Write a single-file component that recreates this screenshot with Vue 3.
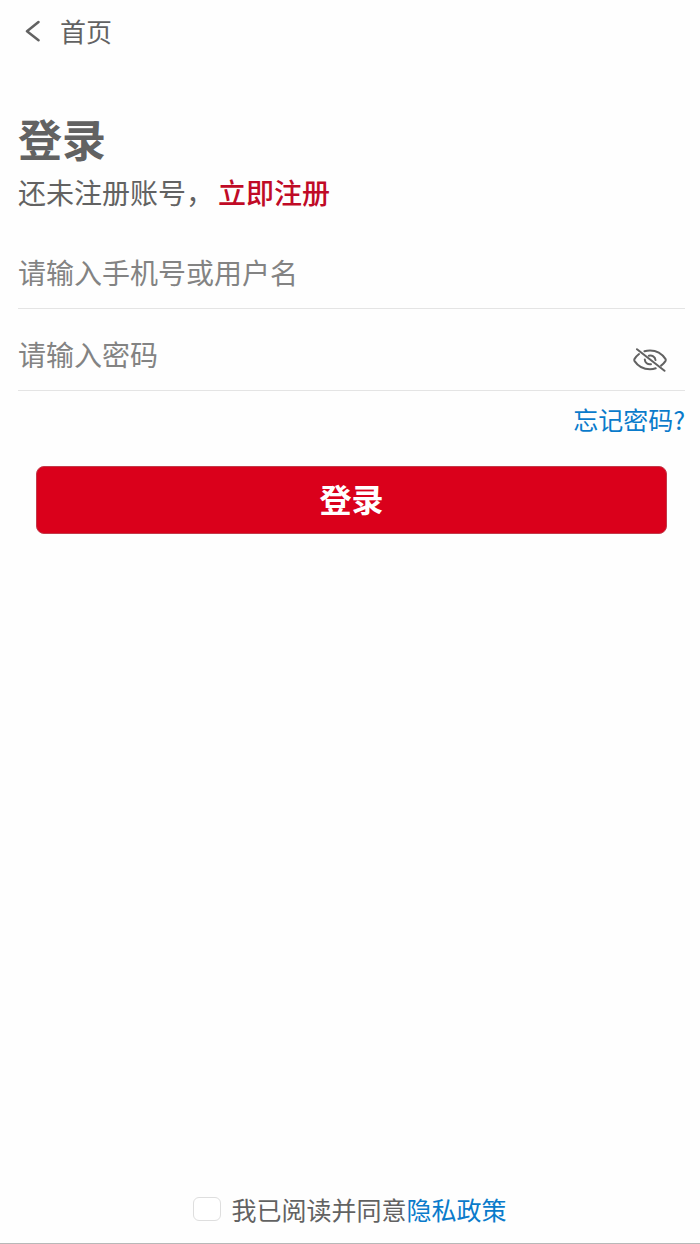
<template>
  <div class="login-page">
    <header class="nav-bar">
      <a href="#" class="back-link">
        <svg class="back-icon" viewBox="0 0 16 22" fill="none" aria-hidden="true">
          <path d="M13.500 2L2 11.300l11.500 9" />
        </svg>
        <span>首页</span>
      </a>
    </header>

    <main class="content">
      <h1>登录</h1>
      <p class="register-tip">还未注册账号，<a href="#">立即注册</a></p>

      <form @submit.prevent>
        <div class="field">
          <input
            v-model="username"
            type="text"
            placeholder="请输入手机号或用户名"
            aria-label="手机号或用户名"
          />
        </div>
        <div class="field">
          <input
            v-model="password"
            :type="showPassword ? 'text' : 'password'"
            placeholder="请输入密码"
            aria-label="密码"
          />
          <button
            type="button"
            class="eye-button"
            aria-label="显示密码"
            @click="showPassword = !showPassword"
          >
            <svg viewBox="0 0 34 24" fill="none" aria-hidden="true">
              <path d="M11.500 3.300C13.200 2.700 15 2.400 17 2.400c7.500 0 12.500 4 15.400 8.500.5.800.5 1.400 0 2.200-1.200 1.800-2.500 3.200-4.300 4.500" />
              <path d="M6 6C4.300 7.300 2.800 9 1.600 10.900c-.5.800-.5 1.400 0 2.200C4.500 17.500 9.500 21.200 17 21.200c2.100 0 4-.3 5.700-.9" />
              <path d="M15.800 7.700c3.300-.7 6.300 1 6.700 4.300" />
              <path d="M11.800 11.500c.1 3.200 2.800 5.300 6.200 4.700" />
              <path d="M4 1.200L31.500 22.800" />
            </svg>
          </button>
        </div>
        <a href="#" class="forgot-link">忘记密码?</a>
        <button type="submit" class="login-button">登录</button>
      </form>
    </main>

    <footer class="agreement">
      <input id="agree" v-model="agreed" type="checkbox" />
      <label for="agree">我已阅读并同意</label><a href="#">隐私政策</a>
    </footer>
  </div>
</template>

<script setup>
import { ref } from 'vue';

const username = ref('');
const password = ref('');
const showPassword = ref(false);
const agreed = ref(false);
</script>

<style>
body {
  background: #fefefe;
}
</style>

<style scoped>
.login-page {
  display: flex;
  flex-direction: column;
  min-height: 100vh;
  box-sizing: border-box;
  border-bottom: 1px solid #b8b8b8;
  color: #626262;
  font-family: "Noto Sans CJK SC", sans-serif;
}

a {
  text-decoration: none;
}

.nav-bar {
  padding: 11px 25px;
}

.back-link {
  display: inline-flex;
  align-items: center;
  gap: 19px;
  color: #626262;
  font-size: 26px;
  line-height: 40px;
}

.back-icon {
  width: 16px;
  height: 22px;
  stroke: #626262;
  stroke-width: 2.5;
  stroke-linecap: round;
  stroke-linejoin: round;
}

.content {
  flex: 1;
  padding: 46px 15px 0 18px;
}

h1 {
  margin: 0;
  font-size: 44px;
  font-weight: 700;
  line-height: 60px;
}

.register-tip {
  margin: 4px 0 24px;
  font-size: 28px;
  line-height: 40px;
}

.register-tip a {
  margin-left: 4px;
  color: #c00a26;
  font-weight: 500;
}

.field {
  display: flex;
  align-items: center;
  height: 72px;
  padding-right: 18px;
  border-bottom: 1px solid #e4e4e4;
}

.field + .field {
  margin-top: 9px;
}

.field input {
  flex: 1;
  min-width: 0;
  padding: 0;
  border: none;
  outline: none;
  background: transparent;
  color: #626262;
  font-family: inherit;
  font-size: 28px;
  line-height: 40px;
}

.field input::placeholder {
  color: #838383;
  opacity: 1;
}

.eye-button {
  width: 34px;
  height: 24px;
  margin-top: 12px;
  padding: 0;
  border: none;
  background: none;
  cursor: pointer;
}

.eye-button svg {
  display: block;
  width: 34px;
  height: 24px;
  stroke: #626262;
  stroke-width: 2;
  stroke-linecap: round;
}

.forgot-link {
  display: block;
  margin-top: 10px;
  color: #0a7bcb;
  font-size: 25px;
  line-height: 36px;
  text-align: right;
}

.login-button {
  display: block;
  width: calc(100% - 36px);
  height: 68px;
  margin: 29px 18px 0;
  padding: 0 0 4px;
  border: 1px solid #c23a4a;
  border-radius: 8px;
  background: #da001b;
  color: #fff;
  font-family: inherit;
  font-size: 32px;
  font-weight: 700;
  cursor: pointer;
}

.agreement {
  display: flex;
  align-items: center;
  justify-content: center;
  padding: 16px 0;
  font-size: 25px;
  line-height: 36px;
}

.agreement input {
  appearance: none;
  width: 28px;
  height: 24px;
  margin: 0 10px 0 0;
  border: 1px solid #dedede;
  border-radius: 6px;
  background: #fff;
}

.agreement input:checked {
  background: #0a7bcb;
}

.agreement a {
  color: #0a7bcb;
}
</style>
